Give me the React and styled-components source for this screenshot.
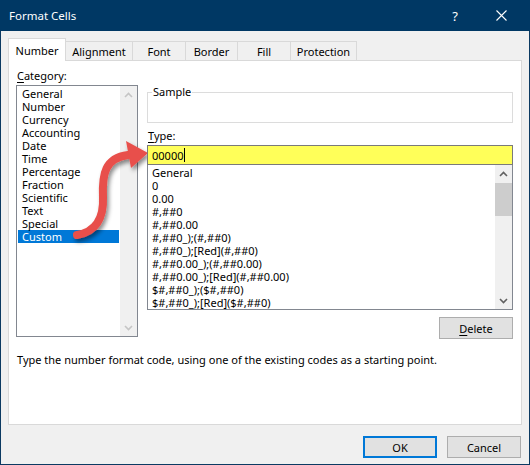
import React from "react";
import styled, { createGlobalStyle } from "styled-components";

const GlobalStyle = createGlobalStyle`
  html, body {
    margin: 0;
    padding: 0;
    background: #ffffff;
  }
  * {
    box-sizing: border-box;
  }
`;

const FONT = `"Noto Sans", "Open Sans", Arial, sans-serif`;

const categories = [
  "General",
  "Number",
  "Currency",
  "Accounting",
  "Date",
  "Time",
  "Percentage",
  "Fraction",
  "Scientific",
  "Text",
  "Special",
  "Custom",
];

const formats = [
  "General",
  "0",
  "0.00",
  "#,##0",
  "#,##0.00",
  "#,##0_);(#,##0)",
  "#,##0_);[Red](#,##0)",
  "#,##0.00_);(#,##0.00)",
  "#,##0.00_);[Red](#,##0.00)",
  "$#,##0_);($#,##0)",
  "$#,##0_);[Red]($#,##0)",
];

const tabs = [
  { label: "Number", width: 58 },
  { label: "Alignment", width: 68 },
  { label: "Font", width: 54 },
  { label: "Border", width: 53 },
  { label: "Fill", width: 54 },
  { label: "Protection", width: 67 },
];

const Window = styled.div`
  position: relative;
  width: 530px;
  height: 465px;
  display: flex;
  flex-direction: column;
  background: #f0f0f0;
  border: 1px solid #0c3a62;
  border-top: none;
  font-family: ${FONT};
  font-size: 11px;
  color: #000;
`;

const TitleBar = styled.div`
  height: 31px;
  margin: 0 -1px;
  background: #003864;
  color: #fff;
  display: flex;
  align-items: center;
  padding-left: 9px;
  font-size: 11.5px;
`;

const Title = styled.div`
  flex: 1;
`;

const HelpBtn = styled.div`
  width: 46px;
  text-align: center;
  font-size: 13px;
`;

const CloseBtn = styled.div`
  width: 46px;
  height: 31px;
  display: flex;
  align-items: center;
  justify-content: center;
  margin-right: 6px;
`;

const Body = styled.div`
  flex: 1;
  display: flex;
  flex-direction: column;
  padding: 7px 7px 0 7px;
`;

const TabRow = styled.div`
  display: flex;
  align-items: flex-end;
  height: 23px;
  position: relative;
  z-index: 1;
  margin-bottom: -1px;
`;

const Tab = styled.div`
  width: ${(p) => p.$w}px;
  height: ${(p) => (p.$active ? 23 : 20)}px;
  display: flex;
  align-items: center;
  justify-content: center;
  background: ${(p) => (p.$active ? "#ffffff" : "#f0f0f0")};
  border: 1px solid #d9d9d9;
  border-bottom: ${(p) => (p.$active ? "none" : "1px solid #d9d9d9")};
  margin-left: ${(p) => (p.$first ? 0 : -1)}px;
  padding-top: ${(p) => (p.$active ? 0 : 1)}px;
`;

const Panel = styled.div`
  height: 365px;
  background: #ffffff;
  border: 1px solid #d9d9d9;
  padding: 8px 7px 0 7px;
  display: flex;
  flex-direction: column;
`;

const Columns = styled.div`
  display: flex;
  gap: 9px;
`;

const LeftCol = styled.div`
  width: 122px;
  display: flex;
  flex-direction: column;
`;

const RightCol = styled.div`
  width: 366px;
  display: flex;
  flex-direction: column;
  padding-top: 16px;
`;

const Label = styled.div`
  height: 16px;
  line-height: 14px;
  padding-left: 1px;
`;

const Key = styled.span`
  text-decoration: underline;
  text-underline-offset: 2px;
`;

const ListBox = styled.div`
  position: relative;
  height: ${(p) => p.$h}px;
  margin-top: ${(p) => p.$mt || 0}px;
  border: 1px solid #828790;
  background: #fff;
  padding: ${(p) => p.$pad || "1px"};
  overflow: hidden;
`;

const Item = styled.div`
  height: 13px;
  line-height: 13px;
  padding-left: ${(p) => p.$indent}px;
  white-space: nowrap;
  background: ${(p) => (p.$selected ? "#0078d7" : "transparent")};
  color: ${(p) => (p.$selected ? "#ffffff" : "#000")};
  width: ${(p) => (p.$width ? `${p.$width}px` : "auto")};
`;

const ScrollTrack = styled.div`
  position: absolute;
  top: 0;
  right: 0;
  bottom: 0;
  width: 17px;
  background: #f0f0f0;
  display: flex;
  flex-direction: column;
  justify-content: space-between;
  align-items: center;
`;

const ScrollBtn = styled.div`
  height: 17px;
  width: 17px;
  display: flex;
  align-items: center;
  justify-content: center;
`;

const Thumb = styled.div`
  position: absolute;
  left: 0;
  right: 0;
  top: 18px;
  height: 33px;
  background: #cdcdcd;
`;

const Group = styled.fieldset`
  margin: 0;
  padding: 0;
  height: 38px;
  border: 1px solid #dcdcdc;
`;

const Legend = styled.legend`
  padding: 0 1px;
  margin-left: 4px;
  line-height: 14px;
  font-size: 11px;
`;

const TypeLabel = styled(Label)`
  margin-top: 6px;
`;

const TypeInput = styled.div`
  height: 20px;
  border: 1px solid #7a7a7a;
  background: #ffff59;
  display: flex;
  align-items: center;
  padding-left: 4px;
  position: relative;
  z-index: 1;
`;

const Caret = styled.span`
  display: inline-block;
  width: 1px;
  height: 14px;
  background: #000;
  margin-left: 1px;
`;

const ButtonRow = styled.div`
  display: flex;
  justify-content: flex-end;
  gap: ${(p) => p.$gap || 0}px;
  margin-top: ${(p) => p.$mt || 0}px;
`;

const Button = styled.div`
  width: 74px;
  height: 22px;
  display: flex;
  align-items: center;
  justify-content: center;
  background: #e1e1e1;
  border: ${(p) => (p.$focused ? "2px solid #0078d7" : "1px solid #adadad")};
`;

const Hint = styled.div`
  margin-top: 14px;
  padding-left: 1px;
  line-height: 14px;
`;

const Footer = styled(ButtonRow)`
  margin-right: 1px;
`;

const ArrowLayer = styled.svg`
  position: absolute;
  left: 0;
  top: 0;
  pointer-events: none;
  overflow: visible;
`;

const Chevron = ({ up, color }) => (
  <svg width="9" height="6" viewBox="0 0 9 6">
    <path
      d={up ? "M1 5 L4.5 1.5 L8 5" : "M1 1 L4.5 4.5 L8 1"}
      fill="none"
      stroke={color}
      strokeWidth="1.6"
    />
  </svg>
);

export default function App() {
  return (
    <>
      <GlobalStyle />
      <Window>
        <TitleBar>
          <Title>Format Cells</Title>
          <HelpBtn>?</HelpBtn>
          <CloseBtn>
            <svg width="11" height="11" viewBox="0 0 11 11">
              <path d="M0.5 0.5 L10.5 10.5 M10.5 0.5 L0.5 10.5" stroke="#fff" strokeWidth="1.1" />
            </svg>
          </CloseBtn>
        </TitleBar>
        <Body>
          <TabRow>
            {tabs.map((t, i) => (
              <Tab key={t.label} $w={t.width} $active={i === 0} $first={i === 0}>
                {t.label}
              </Tab>
            ))}
          </TabRow>
          <Panel>
            <Columns>
              <LeftCol>
                <Label>
                  <Key>C</Key>ategory:
                </Label>
                <ListBox $h={252} $pad="1px 0 0 1px">
                  {categories.map((c) => (
                    <Item key={c} $indent={4} $width={101} $selected={c === "Custom"}>
                      {c}
                    </Item>
                  ))}
                  <ScrollTrack>
                    <ScrollBtn>
                      <Chevron up color="#c5c5c5" />
                    </ScrollBtn>
                    <ScrollBtn>
                      <Chevron color="#c5c5c5" />
                    </ScrollBtn>
                  </ScrollTrack>
                </ListBox>
              </LeftCol>
              <RightCol>
                <Group>
                  <Legend>Sample</Legend>
                </Group>
                <TypeLabel>
                  <Key>T</Key>ype:
                </TypeLabel>
                <TypeInput>
                  00000
                  <Caret />
                </TypeInput>
                <ListBox $h={146} $mt={-1} $pad="1px 0 0 4px">
                  {formats.map((f) => (
                    <Item key={f} $indent={0}>
                      {f}
                    </Item>
                  ))}
                  <ScrollTrack>
                    <ScrollBtn>
                      <Chevron up color="#606060" />
                    </ScrollBtn>
                    <Thumb />
                    <ScrollBtn>
                      <Chevron color="#606060" />
                    </ScrollBtn>
                  </ScrollTrack>
                </ListBox>
                <ButtonRow $mt={7}>
                  <Button>
                    <Key>D</Key>elete
                  </Button>
                </ButtonRow>
              </RightCol>
            </Columns>
            <Hint>Type the number format code, using one of the existing codes as a starting point.</Hint>
          </Panel>
          <Footer $gap={10} $mt={11}>
            <Button $focused>OK</Button>
            <Button>Cancel</Button>
          </Footer>
        </Body>
        <ArrowLayer width="530" height="465">
          <defs>
            <filter id="shadow" x="-30%" y="-30%" width="160%" height="160%">
              <feDropShadow dx="2" dy="3" stdDeviation="2" floodColor="#000" floodOpacity="0.45" />
            </filter>
          </defs>
          <g filter="url(#shadow)">
            <path
              d="M76 235 C94 232 103 219 102 197 C101 174 104 158 127 155"
              fill="none"
              stroke="#e8504b"
              strokeWidth="8"
              strokeLinecap="round"
            />
            <polygon points="125,141 147,153 130,168" fill="#e8504b" />
          </g>
        </ArrowLayer>
      </Window>
    </>
  );
}
